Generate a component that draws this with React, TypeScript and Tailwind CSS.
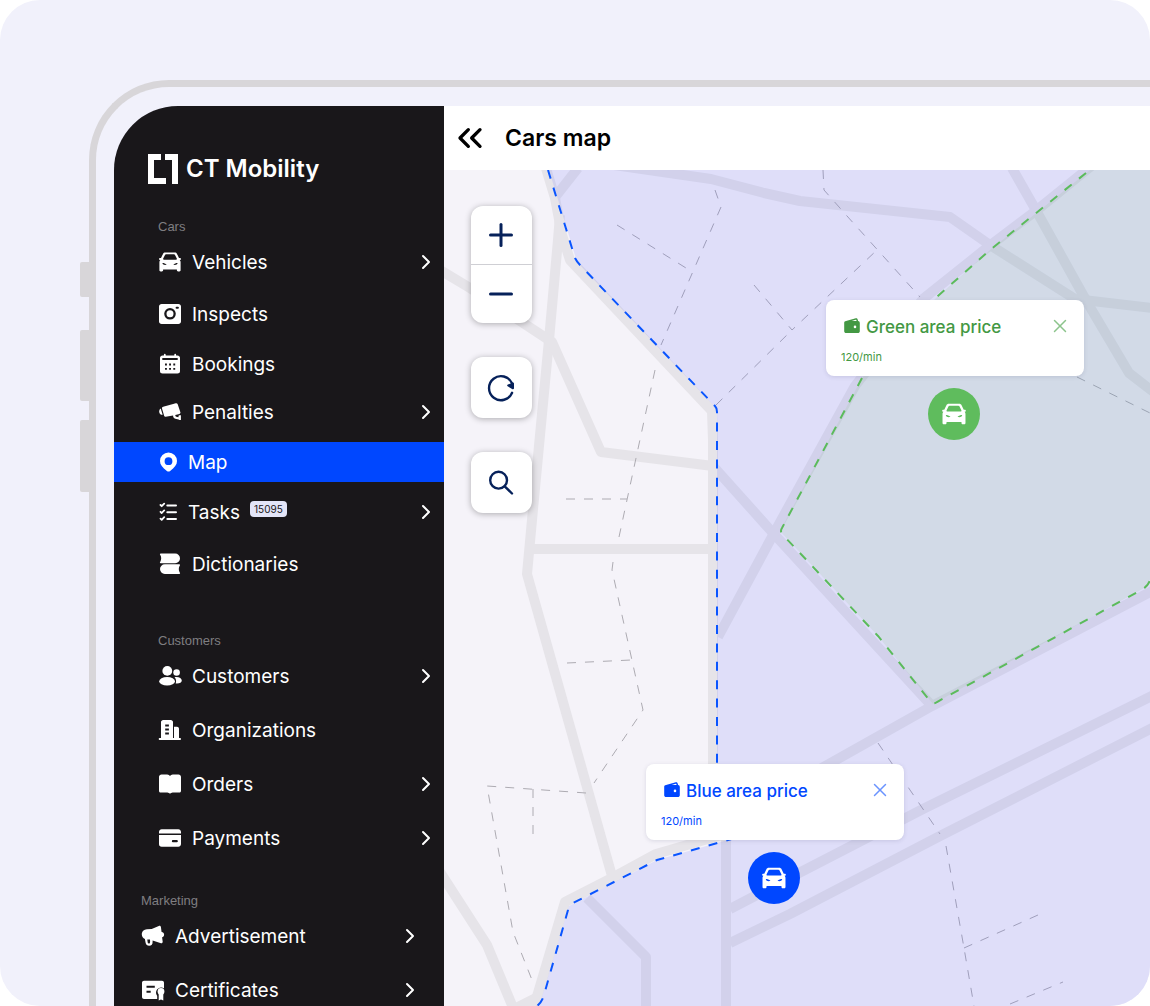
import React from 'react';
import { ChevronRight, ChevronsLeft, Minus, Plus, X } from 'lucide-react';

type IconProps = { className?: string };

interface NavItem {
  label: string;
  icon: React.ComponentType<IconProps>;
  iconSize?: string;
  spacing?: string;
  hasChildren?: boolean;
  active?: boolean;
  badge?: string;
}

interface NavGroup {
  title: string;
  className: string;
  rowPadding: string;
  items: NavItem[];
}

function CarIcon({ className }: IconProps) {
  return (
    <svg viewBox="0 0 24 24" fill="currentColor" fillRule="evenodd" className={className} aria-hidden="true">
      <path d="M7.2 2.5h9.6c1 0 1.8.5 2.2 1.4L21 8h1.200c.4 0 .7.3.7.7v.6c0 .4-.3.7-.7.7h-.5c.7.7.9 1.4.9 2.3v8c0 .7-.5 1.200-1.200 1.200h-1.300c-.7 0-1.200-.5-1.200-1.200v-.9H5.100v.9c0 .7-.5 1.200-1.200 1.200H2.600c-.7 0-1.200-.5-1.200-1.200v-8c0-.9.2-1.600.9-2.300h-.5c-.4 0-.7-.3-.7-.7v-.6c0-.4.3-.7.7-.7H3l2-4.100c.4-.9 1.200-1.400 2.200-1.400ZM8 4.300c-.5 0-.8.2-1 .6L5.200 8.600c-.3.6.100 1.200.8 1.200h12c.7 0 1.100-.6.8-1.200L17 4.900c-.2-.4-.5-.6-1-.6ZM4.400 13c1.500 0 3.100.6 4.400 1.600-1.700.8-4 .4-4.400-1.600ZM19.600 13c-1.500 0-3.100.6-4.400 1.600 1.700.8 4 .4 4.400-1.600Z" />
    </svg>
  );
}

function CameraIcon({ className }: IconProps) {
  return (
    <svg viewBox="0 0 24 24" fill="currentColor" fillRule="evenodd" className={className} aria-hidden="true">
      <path d="M3.600 2h16.800C21.800 2 23 3.100 23 4.500v15c0 1.400-1.200 2.500-2.600 2.500H3.600C2.200 22 1 20.900 1 19.500v-15C1 3.100 2.200 2 3.600 2ZM12 6a5.800 5.800 0 1 0 0 11.600A5.800 5.800 0 0 0 12 6Zm0 2.300a3.500 3.500 0 1 1 0 7 3.500 3.500 0 0 1 0-7Zm6.600-3.500a1 1 0 0 0 0 2h1.300a1 1 0 0 0 0-2Z" />
    </svg>
  );
}

function CalendarIcon({ className }: IconProps) {
  return (
    <svg viewBox="0 0 24 24" fill="currentColor" fillRule="evenodd" className={className} aria-hidden="true">
      <path d="M6.800 1.800c.5 0 .9.4.9.9v.8h8.600v-.8a.9.9 0 0 1 1.800 0v.8h1.400c1.400 0 2.500 1 2.500 2.300v13.400c0 1.300-1.100 2.300-2.500 2.300h-15c-1.400 0-2.500-1-2.500-2.300V5.800c0-1.300 1.100-2.300 2.500-2.300h1.400v-.8c0-.5.4-.9.9-.9ZM4.300 6v1.900h15.400V6ZM7 11.500v1.900h1.900v-1.900Zm4.100 0v1.900H13v-1.900Zm4.200 0v1.900h1.900v-1.900ZM7 15.900v1.900h1.900v-1.900Zm4.100 0v1.900H13v-1.900Zm4.200 0v1.900h1.900v-1.900Z" />
    </svg>
  );
}

function CctvIcon({ className }: IconProps) {
  return (
    <svg viewBox="0 0 24 24" fill="currentColor" className={className} aria-hidden="true">
      <path d="M5.200 6.700 17.800 3.300c.8-.2 1.600.2 1.900 1l2.700 8c.2.7-.2 1.400-.9 1.600l-4.200 1.100c-.1.900.3 1.400 1 1.700l2.200.5v-1c0-.5.4-.9.9-.9h1.500v4.600h-1.500c-.3 0-.6-.2-.8-.5l-3.300-.7c-1.600-.6-2.300-1.700-2.200-3.200l-7.500 1.300c-.6.1-1.200-.2-1.400-.8L4 8.500c-.3-.8.3-1.600 1.200-1.800Z" />
      <path d="M2.700 8.500 4.700 14.800c-2 .2-3.500-1.200-3.500-3.400 0-1.200.5-2.300 1.500-2.900Z" />
    </svg>
  );
}

function PinIcon({ className }: IconProps) {
  return (
    <svg viewBox="0 0 20 20" fill="currentColor" fillRule="evenodd" className={className} aria-hidden="true">
      <path d="M10.500.5a8.500 8.500 0 0 1 8.500 8.600c0 3.700-2.400 6.500-6.900 9.900-1 .8-2.200.8-3.200 0C4.400 15.600 2 12.800 2 9.100A8.500 8.500 0 0 1 10.500.5Zm0 4.800a3.900 3.900 0 1 0 0 7.800 3.900 3.900 0 0 0 0-7.800Z" />
    </svg>
  );
}

function TasksIcon({ className }: IconProps) {
  return (
    <svg viewBox="0 0 20 20" fill="none" stroke="currentColor" strokeWidth="2" strokeLinecap="round" strokeLinejoin="round" className={className} aria-hidden="true">
      <path d="M9.300 3.400H18M9.300 10.200H18M9.300 17H18" />
      <path d="m2.500 3 1.200 1.200 2.500-2.600M2.500 9.800 3.700 11l2.500-2.600M2.500 16.600l1.200 1.200 2.500-2.600" strokeWidth="1.800" />
    </svg>
  );
}

function BooksIcon({ className }: IconProps) {
  return (
    <svg viewBox="0 0 24 24" fill="currentColor" className={className} aria-hidden="true">
      <path d="M2.700 1.600h14.500a4.800 4.800 0 0 1 0 9.600H2.700c-.8 0-1.100-1-.4-1.500 1.200-1.800 1.200-4.800 0-6.600-.7-.6-.4-1.500.4-1.500Z" />
      <path d="M21.300 12.300H6.800a4.800 4.800 0 0 0 0 9.600h14.500c.8 0 1.100-1 .4-1.500-1.200-1.800-1.200-4.800 0-6.600.7-.6.4-1.500-.4-1.500Z" />
    </svg>
  );
}

function PeopleIcon({ className }: IconProps) {
  return (
    <svg viewBox="0 0 24 24" fill="currentColor" className={className} aria-hidden="true">
      <circle cx="9.300" cy="6.900" r="4.900" />
      <ellipse cx="9.100" cy="17.300" rx="7.900" ry="4.300" />
      <circle cx="18.600" cy="8.500" r="3.300" />
      <path d="M16.500 13.200c4.300-.7 7.300 1.100 7.300 3.300 0 1.800-2 3-4.700 3-.7 0-1 0-1.400-.1.800-2.300.4-4.600-1.200-6.200Z" />
    </svg>
  );
}

function BuildingIcon({ className }: IconProps) {
  return (
    <svg viewBox="0 0 24 24" fill="currentColor" fillRule="evenodd" className={className} aria-hidden="true">
      <path d="M5.200 1.900h7.600c1.200 0 2.200 1 2.200 2.200v16H16V8.800h3c1.100 0 2 .9 2 2v9.300h1.100a.9.900 0 0 1 0 1.800H1.600a.9.900 0 0 1 0-1.800H3v-16c0-1.200 1-2.200 2.200-2.200Zm2 4.600v2h3.700v-2Zm0 4v2h3.700v-2Zm0 4v2h3.700v-2Z" />
    </svg>
  );
}

function OpenBookIcon({ className }: IconProps) {
  return (
    <svg viewBox="0 0 24 24" fill="currentColor" className={className} aria-hidden="true">
      <path d="M3.500 2.600h4.300c1.800 0 3.300.4 4.200 1.300.9-.9 2.400-1.300 4.200-1.300h4.300C21.900 2.600 23 3.700 23 5v14c0 .9-.7 1.500-1.500 1.500h-5.800c-1.500 0-2.400.3-3 .8-.4.4-1 .4-1.400 0-.6-.5-1.500-.8-3-.8H2.500c-.8 0-1.500-.6-1.500-1.500V5c0-1.300 1.100-2.400 2.500-2.400Z" />
    </svg>
  );
}

function CardIcon({ className }: IconProps) {
  return (
    <svg viewBox="0 0 24 24" fill="currentColor" fillRule="evenodd" className={className} aria-hidden="true">
      <path d="M3.700 3.300h16.600C21.800 3.300 23 4.500 23 6v1.600H1V6c0-1.500 1.200-2.700 2.700-2.700ZM1 9.100h22v9c0 1.500-1.200 2.700-2.700 2.700H3.700A2.700 2.700 0 0 1 1 18.100Zm13.900 5a1 1 0 0 0 0 2.100h3.900a1 1 0 0 0 0-2.100Z" />
    </svg>
  );
}

function MegaphoneIcon({ className }: IconProps) {
  return (
    <svg viewBox="0 0 24 24" fill="currentColor" fillRule="evenodd" className={className} aria-hidden="true">
      <path d="M17.800 1.900c.9-.5 1.900 0 2.100 1L20.600 8c1.500.1 2.400 1 2.500 2.400s-.7 2.500-2 2.900l.6 4.500c.1 1-.8 1.800-1.700 1.500l-8.400-2.800v1.200c.2 2.500-1.200 4-3.400 4-2 0-3.300-1.100-3.600-3L3.900 15c-1.800-.9-3-2.400-3.100-4.500C.7 7.500 3 5.500 5.900 5.300l4.800-.3ZM6.300 15.500l.4 2.900c.1.700.5 1.100 1.200 1.100.8 0 1.200-.6 1.200-1.500l-.1-2.400Z" />
    </svg>
  );
}

function CertificateIcon({ className }: IconProps) {
  return (
    <svg viewBox="0 0 24 24" fill="currentColor" fillRule="evenodd" className={className} aria-hidden="true">
      <path d="M3 2.800h18c1.100 0 2 .9 2 2v5.400a5.300 5.300 0 0 0-7.800 5.800l1 2v3H3c-1.100 0-2-.9-2-2V4.800c0-1.100.9-2 2-2ZM5.500 7.700v2h8.300v-2Zm0 5v2h4.200v-2Z" />
      <circle cx="20" cy="13.500" r="3.400" />
      <path d="M17.700 15.500h4.600v6.900l-2.300-1-2.300 1Z" />
    </svg>
  );
}

function WalletIcon({ className }: IconProps) {
  return (
    <svg viewBox="0 0 16 16" fill="currentColor" fillRule="evenodd" className={className} aria-hidden="true">
      <path d="M2 3.100 11.800.3c.9-.3 1.600.2 1.800 1l.5 1.800c1 .1 1.700.9 1.700 1.900v8.200c0 1.100-.8 1.800-1.900 1.800H2.100C1 15 .2 14.300.2 13.200V4.800c0-.9.8-1.500 1.800-1.700Zm5.700 0h4.900l-.3-1c-.1-.3-.3-.4-.6-.3ZM11 7.600a1.300 1.300 0 1 0 0 2.600 1.300 1.300 0 0 0 0-2.600Z" />
    </svg>
  );
}

function RefreshIcon({ className }: IconProps) {
  return (
    <svg viewBox="0 0 28 28" fill="none" stroke="currentColor" strokeWidth="2.400" strokeLinecap="round" className={className} aria-hidden="true">
      <path d="M25.100 18.800A12 12 0 1 1 25 9.300" />
      <path d="M21.200 11.400 26 9.600v4.700Z" fill="currentColor" strokeWidth="2" strokeLinejoin="round" />
    </svg>
  );
}

function SearchIcon({ className }: IconProps) {
  return (
    <svg viewBox="0 0 28 28" fill="none" stroke="currentColor" strokeWidth="2.400" strokeLinecap="round" className={className} aria-hidden="true">
      <circle cx="11.600" cy="11.200" r="8.400" />
      <path d="m17.700 17.300 7.300 7.200" />
    </svg>
  );
}

const groups: NavGroup[] = [
  {
    title: 'Cars',
    className: 'mt-[33px]',
    rowPadding: 'pl-11 pr-1.5',
    items: [
      { label: 'Vehicles', icon: CarIcon, hasChildren: true },
      { label: 'Inspects', icon: CameraIcon, spacing: 'mt-3' },
      { label: 'Bookings', icon: CalendarIcon, spacing: 'mt-2.5' },
      { label: 'Penalties', icon: CctvIcon, spacing: 'mt-2', hasChildren: true },
      { label: 'Map', icon: PinIcon, iconSize: 'size-5', spacing: 'mt-2.5', active: true },
      { label: 'Tasks', icon: TasksIcon, iconSize: 'size-5', spacing: 'mt-2.5', hasChildren: true, badge: '15095' },
      { label: 'Dictionaries', icon: BooksIcon, spacing: 'mt-3' },
    ],
  },
  {
    title: 'Customers',
    className: 'mt-[47px]',
    rowPadding: 'pl-11 pr-1.5',
    items: [
      { label: 'Customers', icon: PeopleIcon, hasChildren: true },
      { label: 'Organizations', icon: BuildingIcon, spacing: 'mt-3.5' },
      { label: 'Orders', icon: OpenBookIcon, spacing: 'mt-3.5', hasChildren: true },
      { label: 'Payments', icon: CardIcon, spacing: 'mt-3.5', hasChildren: true },
    ],
  },
  {
    title: 'Marketing',
    className: 'mt-[33px]',
    rowPadding: 'pl-[27px] pr-[22px]',
    items: [
      { label: 'Advertisement', icon: MegaphoneIcon, hasChildren: true },
      { label: 'Certificates', icon: CertificateIcon, spacing: 'mt-3.5', hasChildren: true },
    ],
  },
];

const roads = [
  '545,165 555,198 562,235 570,260 712,411 713,440 713,840',
  '560,215 558,240 549,340 532,520 527,574 612,876',
  '440,270 470,288 552,342 601,452 713,466 773,533 932,706',
  '530,549 713,549',
  '530,1020 565,902 612,878 656,854 732,832',
  '440,872 487,945 514,1010',
  '508,1012 536,998',
  '556,196 578,168',
  '600,163 711,179 764,193 800,201 950,217 990,245 1075,299 1160,309',
  '1012,168 1037,212 1087,302 1129,373 1160,397',
  '718,637 773,535 855,386 923,299 988,247 1037,210 1095,163',
  '820,769 932,706 1160,587',
  '730,909 797,874 923,809 1160,692',
  '730,943 790,914 940,836 1160,724',
  '726,830 726,1010',
  '587,898 646,957 646,1010',
];

const footpaths = [
  '715,190 721,207 661,345',
  '655,370 619,537',
  '613,562 612,570 643,710 594,783',
  '617,225 686,268',
  '754,285 792,330 877,250',
  '716,405 792,330',
  '823,170 824,190 847,216 920,297',
  '566,499 627,499',
  '567,663 631,660',
  '586,793 487,786 513,932 534,985',
  '533,789 533,836',
  '1077,377 1150,413',
  '878,743 940,834',
  '946,846 964,948 974,1006',
  '964,948 1038,915',
  '1010,1004 1063,982',
];

function CityMap() {
  return (
    <svg viewBox="444 170 706 836" preserveAspectRatio="xMinYMin slice" fill="none" className="absolute inset-0 h-full w-full" aria-hidden="true">
      <g stroke="#e6e4e9" strokeWidth="10" strokeLinejoin="round">
        {roads.map(points => (
          <polyline key={points} points={points} />
        ))}
      </g>
      <g stroke="#adabb2" strokeDasharray="9 9">
        {footpaths.map(points => (
          <polyline key={points} points={points} />
        ))}
      </g>

      <path
        d="M549 170 577 262 717 409V762L735 838 657 860 569 906 541 1000 536 1006H1150V170Z"
        fill="#3f4eff"
        fillOpacity="0.12"
      />
      <path
        d="M780 531 862 378 935 299 990 250 1090 170H1150V580L1146 587 933 704 878 636Z"
        fill="#88c97e"
        fillOpacity="0.14"
      />
      <g stroke="#0a55ff" strokeWidth="2" strokeDasharray="9 9.400">
        <path d="M548 170 575 258Q577 262 580 265L715 406Q717 408 717 412V770" />
        <path d="M735 838 657 860 573 903Q569 905 568 910L544 995Q542 1002 537 1006" />
      </g>
      <g stroke="#5bbb5b" strokeWidth="2" strokeDasharray="9 9.400">
        <path d="M1086 173 990 250 930 303" />
        <path d="M862 378 782 528Q780 531 782 534L878 636 930 701Q933 705 937 702L1143 589Q1148 586 1150 580" />
      </g>
    </svg>
  );
}

interface PriceCardProps {
  title: string;
  price: string;
  className: string;
  closeClassName: string;
}

function PriceCard({ title, price, className, closeClassName }: PriceCardProps) {
  return (
    <div className={`absolute w-[258px] rounded-lg bg-white px-[13px] pt-3.5 pb-[11px] shadow-[0_1px_4px_rgba(60,60,100,0.15)] ${className}`}>
      <div className="flex h-6 items-center">
        <WalletIcon className="ml-[5px] size-4" />
        <h2 className="ml-1.5 flex-1 pt-0.5 text-[17px] leading-6 font-medium">{title}</h2>
        <button type="button" aria-label={`Close ${title}`} className={closeClassName}>
          <X className="size-[22px]" strokeWidth={1.6} />
        </button>
      </div>
      <p className="mt-[11px] ml-0.5 text-[11px] leading-4">{price}</p>
    </div>
  );
}

function CarMarker({ label, className }: { label: string; className: string }) {
  return (
    <button type="button" aria-label={label} className={`absolute flex size-[52px] items-center justify-center rounded-full text-white ${className}`}>
      <CarIcon className="size-[26px]" />
    </button>
  );
}

function Sidebar() {
  return (
    <aside className="w-[330px] shrink-0 bg-[#19171a] pt-12 text-white">
      <div className="flex items-center gap-2 pl-[34px]">
        <svg viewBox="0 0 30 30" fill="currentColor" className="size-[30px]" aria-hidden="true">
          <path d="M0 0h13v6H6v18h12v6H0ZM17 0h13v30h-6V6h-7Z" />
        </svg>
        <span className="text-2xl leading-[30px] font-semibold">CT Mobility</span>
      </div>

      <nav>
        {groups.map(group => (
          <section key={group.title} className={group.className}>
            <h2 className={`mb-[5px] font-['Liberation_Sans',sans-serif] text-[13px] leading-5 text-[#7f7e81] ${group.rowPadding}`}>{group.title}</h2>
            <ul>
              {group.items.map(item => {
                const Icon = item.icon;

                return (
                  <li key={item.label} className={item.spacing}>
                    <a
                      href="#"
                      aria-current={item.active ? 'page' : undefined}
                      className={`flex h-10 items-center text-[19px] ${group.rowPadding} ${item.active ? 'bg-[#0047ff]' : ''}`}
                    >
                      <Icon className={item.iconSize ?? 'size-6'} />
                      <span className="ml-2.5 pt-0.5">{item.label}</span>
                      {item.badge && (
                        <span className="mb-1.5 ml-2.5 rounded bg-[#e3e5f8] px-1 text-[10px] leading-4 text-[#19171a]">{item.badge}</span>
                      )}
                      {item.hasChildren && <ChevronRight className="ml-auto size-6" strokeWidth={2} />}
                    </a>
                  </li>
                );
              })}
            </ul>
          </section>
        ))}
      </nav>
    </aside>
  );
}

function MapControls() {
  return (
    <div className="absolute top-9 left-[27px] flex w-[61px] flex-col gap-[34px] text-[#06215a]">
      <div className="divide-y divide-[#cfcfd4] rounded-xl bg-white shadow-[0_1px_6px_rgba(0,0,0,0.3)]">
        <button type="button" aria-label="Zoom in" className="flex h-[59px] w-full items-center justify-center pr-0.5">
          <Plus className="size-9" strokeWidth={2} />
        </button>
        <button type="button" aria-label="Zoom out" className="flex h-[58px] w-full items-center justify-center pr-0.5">
          <Minus className="size-9" strokeWidth={2} />
        </button>
      </div>
      <button type="button" aria-label="Refresh" className="flex h-[61px] items-center justify-center rounded-xl bg-white pr-0.5 shadow-[0_1px_6px_rgba(0,0,0,0.3)]">
        <RefreshIcon className="size-7" />
      </button>
      <button type="button" aria-label="Search" className="flex h-[61px] items-center justify-center rounded-xl bg-white pr-0.5 shadow-[0_1px_6px_rgba(0,0,0,0.3)]">
        <SearchIcon className="size-7" />
      </button>
    </div>
  );
}

export default function App() {
  return (
    <div className="h-screen bg-white">
      <div className="flex h-full overflow-hidden rounded-[40px] bg-[#f1f1fb] pt-20 pl-20 font-['Inter',sans-serif]">
        <div className="flex w-[9px] shrink-0 flex-col pt-[182px]">
          <span className="h-[35px] rounded-l-xs bg-[#d8d6d9]" />
          <span className="mt-[33px] h-[71px] rounded-l-xs bg-[#d8d6d9]" />
          <span className="mt-[19px] h-[72px] rounded-l-xs bg-[#d8d6d9]" />
        </div>

        <div className="flex min-w-0 flex-1 rounded-tl-[80px] border-t-[7px] border-l-[7px] border-[#d8d6d9] pt-[19px] pl-[18px]">
          <div className="flex min-w-0 flex-1 overflow-hidden rounded-tl-[64px]">
            <Sidebar />

            <main className="flex min-w-0 flex-1 flex-col">
              <header className="flex h-16 shrink-0 items-center bg-white text-black">
                <button type="button" aria-label="Collapse menu" className="ml-1.5">
                  <ChevronsLeft className="size-10" strokeWidth={2} />
                </button>
                <h1 className="ml-[15px] text-[23px] font-semibold">Cars map</h1>
              </header>

              <div className="relative flex-1 overflow-hidden bg-[#f5f3f9]">
                <CityMap />
                <MapControls />
                <PriceCard title="Green area price" price="120/min" className="top-[130px] left-[382px] text-[#439843]" closeClassName="text-[#8cc48c]" />
                <CarMarker label="Car in green area" className="top-[218px] left-[484px] bg-[#5fbc5d]" />
                <PriceCard title="Blue area price" price="120/min" className="top-[594px] left-[202px] text-[#0047ff]" closeClassName="text-[#6a93ff]" />
                <CarMarker label="Car in blue area" className="top-[682px] left-[304px] bg-[#0047ff]" />
              </div>
            </main>
          </div>
        </div>
      </div>
    </div>
  );
}
